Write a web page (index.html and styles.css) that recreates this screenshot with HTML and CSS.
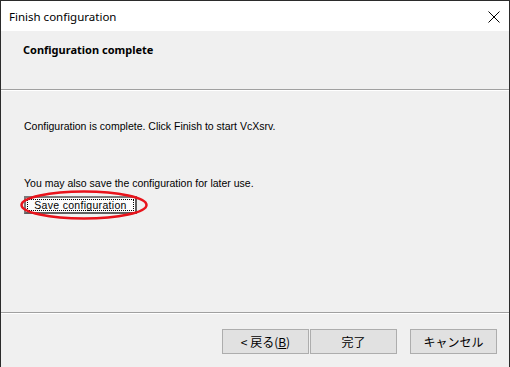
FILE: index.html
```html
<!DOCTYPE html>
<html lang="en">
<head>
  <meta charset="UTF-8">
  <title>Finish configuration</title>
  <link rel="stylesheet" href="styles.css">
</head>
<body>
  <div class="window">
    <div class="title-bar">
      <div class="title">Finish configuration</div>
      <svg class="close" width="12" height="12" viewBox="0 0 12 12">
        <path d="M0.5 0.5 L11.5 11.5 M11.5 0.5 L0.5 11.5" stroke="#000" stroke-width="1" fill="none"/>
      </svg>
    </div>

    <div class="header">
      <div class="header-title">Configuration complete</div>
    </div>

    <div class="content">
      <p class="line">Configuration is complete. Click Finish to start VcXsrv.</p>
      <p class="line second">You may also save the configuration for later use.</p>
      <div class="save-wrap">
        <button class="save-btn"><span>Save configuration</span></button>
        <svg class="mark" width="132" height="34" viewBox="0 0 132 34">
          <ellipse cx="65" cy="17" rx="62.5" ry="13.5" stroke="#e8141c" stroke-width="2.5" fill="none"/>
        </svg>
      </div>
    </div>

    <div class="footer">
      <button class="btn">&lt; 戻る(<u>B</u>)</button>
      <button class="btn">完了</button>
      <button class="btn cancel">キャンセル</button>
    </div>
  </div>
</body>
</html>
```

FILE: styles.css
```css
* {
  box-sizing: border-box;
}

body {
  margin: 0;
  background-color: #2b2b2b;
  font-family: "Liberation Sans", Arial, sans-serif;
}

.window {
  margin: 1px 1px 0 1px;
  height: 366px;
  background-color: #f0f0f0;
  display: flex;
  flex-direction: column;
}

.title-bar {
  height: 30px;
  background-color: #fff;
  display: flex;
  align-items: center;
  justify-content: space-between;
  padding: 0 9px 0 8px;
}

.title {
  font-family: "Noto Sans", sans-serif;
  font-size: 11.5px;
  color: #000;
}

.close {
  display: block;
  margin-top: 1px;
}

.header {
  height: 60px;
  border-bottom: 1px solid #fff;
  box-shadow: inset 0 -1px 0 #a0a0a0;
  padding: 11px 0 0 22px;
}

.header-title {
  font-family: "Noto Sans", sans-serif;
  font-size: 11px;
  font-weight: bold;
  color: #000;
}

.content {
  flex: 1;
  padding: 28px 0 0 23px;
  border-bottom: 1px solid #fff;
  box-shadow: inset 0 -1px 0 #a0a0a0;
}

.line {
  margin: 0;
  font-size: 10.5px;
  line-height: 14px;
  color: #000;
}

.second {
  margin-top: 43px;
}

.save-wrap {
  position: relative;
  margin-top: 6px;
  width: 113px;
}

.save-btn {
  display: block;
  width: 113px;
  height: 18px;
  padding: 1px;
  background-color: #fcfcfc;
  border: 2px solid #7a7a7a;
  border-right-color: #5e5e5e;
  border-bottom-color: #5e5e5e;
  font-family: "Liberation Sans", Arial, sans-serif;
  font-size: 10.5px;
  letter-spacing: 0.3px;
  color: #000;
}

.save-btn span {
  display: block;
  height: 100%;
  line-height: 11px;
  border: 1px dotted #000;
}

.mark {
  position: absolute;
  left: -5px;
  top: -8px;
}

.footer {
  height: 53px;
  display: flex;
  align-items: flex-start;
  padding: 15px 0 0 221px;
}

.btn {
  width: 87px;
  height: 25px;
  margin: 0;
  padding: 0;
  background-color: #e1e1e1;
  border: 1px solid #adadad;
  font-family: "Noto Sans CJK JP", sans-serif;
  font-size: 12px;
  color: #000;
}

.btn + .btn {
  margin-left: 1px;
}

.btn.cancel {
  margin-left: 13px;
}
```
